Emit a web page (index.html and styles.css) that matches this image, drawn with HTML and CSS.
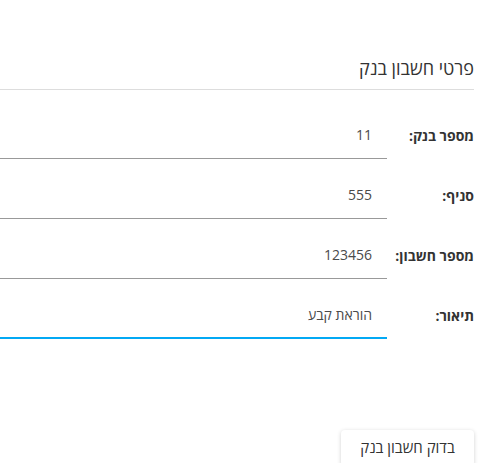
FILE: index.html
```html
<!DOCTYPE html>
<html lang="he" dir="rtl">
<head>
  <meta charset="utf-8">
  <title>פרטי חשבון בנק</title>
  <link rel="stylesheet" href="styles.css">
</head>
<body>
  <div class="container">
    <h2 class="section-title">פרטי חשבון בנק</h2>

    <form class="bank-form">
      <div class="form-row">
        <label for="bank">מספר בנק:</label>
        <input type="text" id="bank" value="11">
      </div>

      <div class="form-row">
        <label for="branch">סניף:</label>
        <input type="text" id="branch" value="555">
      </div>

      <div class="form-row">
        <label for="account">מספר חשבון:</label>
        <input type="text" id="account" value="123456">
      </div>

      <div class="form-row">
        <label for="desc">תיאור:</label>
        <input type="text" id="desc" class="active" value="הוראת קבע">
      </div>
    </form>

    <div class="actions">
      <button type="button">בדוק חשבון בנק</button>
    </div>
  </div>
</body>
</html>
```

FILE: styles.css
```css
/* CSS styles */

body {
  font-family: "Open Sans", "DejaVu Sans", sans-serif;
  background-color: #fff;
  margin: 0;
  padding: 0;
  overflow: hidden;
}

.container {
  padding: 56px 23px 0 0;
}

.section-title {
  font-size: 18px;
  font-weight: normal;
  color: #333;
  margin: 0;
  padding-bottom: 8px;
  line-height: 25px;
  border-bottom: 1px solid #ddd;
}

.bank-form {
  margin-top: 29px;
  display: flex;
  flex-direction: column;
  gap: 20px;
}

.form-row {
  display: flex;
  align-items: center;
  height: 40px;
}

label {
  width: 87px;
  flex-shrink: 0;
  margin-bottom: 8px;
  font-size: 14px;
  font-weight: bold;
  color: #333;
}

input[type="text"] {
  flex: 1;
  height: 40px;
  box-sizing: border-box;
  border: none;
  border-bottom: 1px solid #999;
  padding: 0 15px 8px 0;
  font-family: inherit;
  font-size: 14px;
  color: #4a4a4a;
  background: transparent;
  text-align: right;
}

input.active {
  border-bottom: 2px solid #03a9f4;
  outline: none;
}

.actions {
  margin-top: 91px;
}

button {
  font-family: inherit;
  font-size: 15px;
  color: #333;
  background-color: #fff;
  width: 133px;
  height: 36px;
  padding: 0 0 3px 0;
  border: none;
  border-radius: 4px;
  box-shadow: 0 1px 4px rgba(0, 0, 0, 0.18);
  cursor: pointer;
}
```
